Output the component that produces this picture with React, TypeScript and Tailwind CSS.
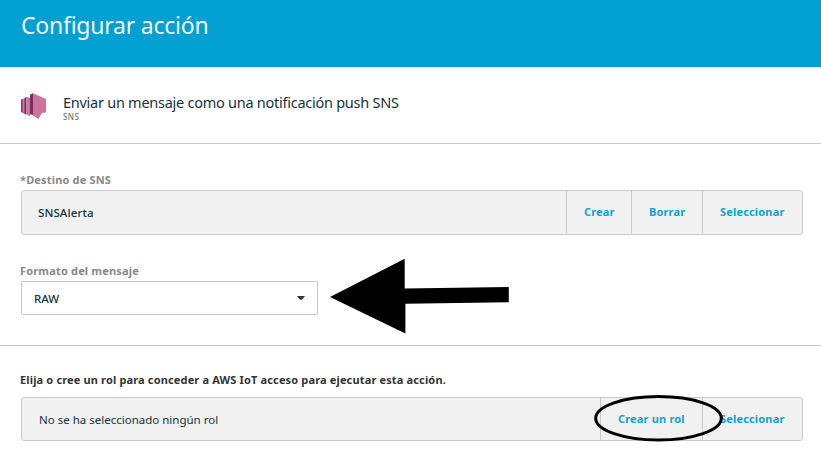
import type { ReactNode } from "react";

function Action({ children, width }: { children: ReactNode; width: string }) {
  return (
    <button
      type="button"
      className={`${width} flex items-center border-l border-[#c8c8c8] pl-[17px] text-[11px] font-bold tracking-[0.17px] whitespace-nowrap text-[#0fa3cf]`}
    >
      {children}
    </button>
  );
}

function SnsIcon() {
  return (
    <svg viewBox="0 0 26 27" className="h-[27px] w-[26px] shrink-0">
      <path d="M0 6.500l2-.7v14.200l-2-1z" fill="#8a3668" />
      <path d="M1.500 6l2.500-.5v15.500l-2.500-1z" fill="#cc739f" />
      <path d="M3.500 4.800l2-.8v17.500l-2-.5z" fill="#7c2d60" />
      <path d="M5.500 4l3.500.8v18.400l-3.500-1.700z" fill="#cc739f" />
      <path d="M9 1.800l3-1.500v21.700l-3-.8z" fill="#7c2d60" />
      <path d="M12 .3l13 5.700v13.500l-4 .5-3.500 6-5.500-3.500z" fill="#cc739f" />
    </svg>
  );
}

export default function App() {
  return (
    <main className="relative h-[469px] w-[821px] overflow-hidden bg-white font-['Noto_Sans',sans-serif] text-[#16323d]">
      <header className="h-[67px] bg-[#00a1d2] pt-[9px] pl-[21px]">
        <h1 className="text-[23px] leading-[32px] tracking-[-0.23px] whitespace-nowrap text-[#f2f6f7]">Configurar acción</h1>
      </header>
      <section className="flex h-[77px] border-b border-[#c8c8c8] pt-[26px] pl-[21px]">
        <SnsIcon />
        <div className="-mt-px ml-4">
          <h2 className="text-[14.500px] leading-5 tracking-[-0.26px] whitespace-nowrap">Enviar un mensaje como una notificación push SNS</h2>
          <p className="text-[8px] leading-[9px] font-medium tracking-[0.4px] text-[#777]">SNS</p>
        </div>
      </section>
      <section className="h-[202px] border-b border-[#c8c8c8] px-[21px] pt-[28px]">
        <p className="-ml-px h-[18px] text-[11px] leading-4 font-bold tracking-[0.17px] text-[#888]">*Destino de SNS</p>
        <div className="flex h-[45px] w-[782px] rounded-[3px] border border-[#c8c8c8] bg-[#f1f1f1] pb-px">
          <span className="flex flex-1 items-center pt-0.5 pl-4 text-[11.500px] font-medium tracking-[0.1px]">SNSAlerta</span>
          <Action width="w-[65px]">Crear</Action>
          <Action width="w-[71px]">Borrar</Action>
          <Action width="w-[100px]">Seleccionar</Action>
        </div>
        <p className="mt-7 -ml-px h-[18px] text-[11px] leading-4 font-bold tracking-[0.17px] text-[#888]">Formato del mensaje</p>
        <div className="flex h-[34px] w-[297px] items-center justify-between rounded-[2px] border border-[#c8c8c8] pr-3 pl-3">
          <span className="pt-0.5 text-[11.500px] font-medium">RAW</span>
          <svg viewBox="0 0 8 4" className="h-1 w-2"><path d="M0 0h8L5 3.700H3z" fill="#333" /></svg>
        </div>
      </section>
      <section className="px-[21px] pt-[26px]">
        <p className="-ml-px h-[25px] text-[11px] leading-4 font-bold tracking-[0.15px] whitespace-nowrap text-[#333]">Elija o cree un rol para conceder a AWS IoT acceso para ejecutar esta acción.</p>
        <div className="flex h-[44px] w-[782px] rounded-[3px] border border-[#c8c8c8] bg-[#f1f1f1]">
          <span className="flex flex-1 items-center pt-0.5 pl-[17px] text-[11.500px]">No se ha seleccionado ningún rol</span>
          <Action width="w-[102px]">Crear un rol</Action>
          <Action width="w-[100px]">Seleccionar</Action>
        </div>
      </section>
      <svg viewBox="0 0 821 469" className="pointer-events-none absolute inset-0 h-[469px] w-[821px]">
        <path d="M330 297L404.700 258.800V288.500L508.800 287V302.300L405.400 303.700V333.500z" fill="#000" />
        <ellipse cx="658.500" cy="418.300" rx="62.800" ry="21.700" fill="none" stroke="#000" strokeWidth="3" />
      </svg>
    </main>
  );
}
